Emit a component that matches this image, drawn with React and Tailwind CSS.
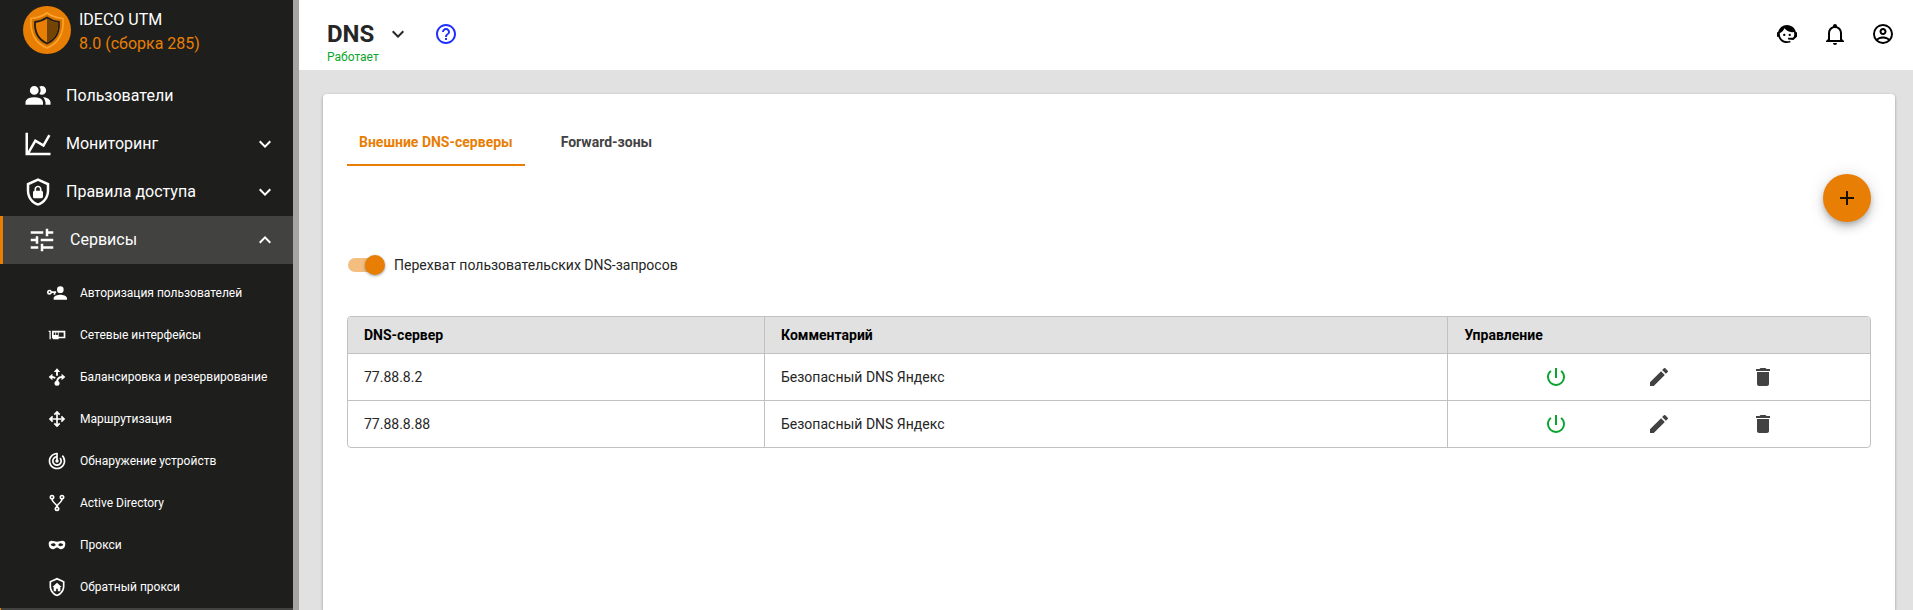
import { MdAdd, MdDelete, MdEdit, MdHelpOutline, MdPowerSettingsNew, MdTrackChanges, MdTune } from "react-icons/md";

const paths = {
  users:
    "M16 17V19H2V17S2 13 9 13 16 17 16 17M12.5 7.5A3.5 3.5 0 1 0 9 11A3.5 3.5 0 0 0 12.5 7.5M15.94 13A5.32 5.32 0 0 1 18 17V19H22V17S22 13.37 15.94 13M15 4A3.39 3.39 0 0 0 13.07 4.59A5 5 0 0 1 13.07 10.41A3.39 3.39 0 0 0 15 11A3.5 3.5 0 0 0 15 4Z",
  chart:
    "M16,11.78L20.24,4.45L21.97,5.45L16.74,14.5L10.23,10.75L5.46,19H22V21H2V3H4V17.54L9.5,8L16,11.78Z",
  shieldLock:
    "M21,11C21,16.55 17.16,21.74 12,23C6.84,21.74 3,16.55 3,11V5L12,1L21,5V11M12,21C15.75,20 19,15.54 19,11.22V6.3L12,3.18L5,6.3V11.22C5,15.54 8.25,20 12,21M14.8,11V9.5C14.8,8.1 13.4,7 12,7C10.6,7 9.2,8.1 9.2,9.5V11C8.6,11 8,11.6 8,12.2V15.7C8,16.4 8.6,17 9.2,17H14.7C15.4,17 16,16.4 16,15.8V12.3C16,11.6 15.4,11 14.8,11M13.5,11H10.5V9.5C10.5,8.7 11.2,8.2 12,8.2C12.8,8.2 13.5,8.7 13.5,9.5V11Z",
  userKey:
    "M11,10V12H10V14H8V12H5.83C5.42,13.17 4.31,14 3,14A3,3 0 0,1 0,11A3,3 0 0,1 3,8C4.31,8 5.42,8.83 5.83,10H11M3,10A1,1 0 0,0 2,11A1,1 0 0,0 3,12A1,1 0 0,0 4,11A1,1 0 0,0 3,10M16,14C18.67,14 24,15.34 24,18V20H8V18C8,15.34 13.33,14 16,14M16,12A4,4 0 0,1 12,8A4,4 0 0,1 16,4A4,4 0 0,1 20,8A4,4 0 0,1 16,12Z",
  card: "M2 7H4.5V17H3V8.5H2V7M22 7V16H14V17H7V16H6V7H22M10 9H8V12H10V9M13 9H11V12H13V9M20 9H14V14H20V9Z",
  arrows:
    "M13,11H18L16.5,9.5L17.92,8.08L21.84,12L17.92,15.92L16.5,14.5L18,13H13V18L14.5,16.5L15.92,17.92L12,21.84L8.08,17.92L9.5,16.5L11,18V13H6L7.5,14.5L6.08,15.92L2.16,12L6.08,8.08L7.5,9.5L6,11H11V6L9.5,7.5L8.08,6.08L12,2.16L15.92,6.08L14.5,7.5L13,6V11Z",
  fork: "M6,2A3,3 0 0,1 9,5C9,6.28 8.19,7.38 7.06,7.81C7.15,8.27 7.39,8.83 8,9.63C9,10.92 11,12.83 12,14.17C13,12.83 15,10.92 16,9.63C16.61,8.83 16.85,8.27 16.94,7.81C15.81,7.38 15,6.28 15,5A3,3 0 0,1 18,2A3,3 0 0,1 21,5C21,6.32 20.14,7.45 18.95,7.85C18.87,8.37 18.64,9 18,9.83C17,11.17 15,13.08 14,14.38C13.39,15.17 13.15,15.73 13.06,16.19C14.19,16.62 15,17.72 15,19A3,3 0 0,1 12,22A3,3 0 0,1 9,19C9,17.72 9.81,16.62 10.94,16.19C10.85,15.73 10.61,15.17 10,14.38C9,13.08 7,11.17 6,9.83C5.36,9 5.13,8.37 5.05,7.85C3.86,7.45 3,6.32 3,5A3,3 0 0,1 6,2M6,4A1,1 0 0,0 5,5A1,1 0 0,0 6,6A1,1 0 0,0 7,5A1,1 0 0,0 6,4M18,4A1,1 0 0,0 17,5A1,1 0 0,0 18,6A1,1 0 0,0 19,5A1,1 0 0,0 18,4M12,18A1,1 0 0,0 11,19A1,1 0 0,0 12,20A1,1 0 0,0 13,19A1,1 0 0,0 12,18Z",
  mask: "M5.5 7C8 7 9.500 8 12 8S16 7 18.500 7C20.500 7 22 8.200 22 10.500C22 14.500 20 17 17 17C14.500 17 13.500 15 12 15S9.500 17 7 17C4 17 2 14.500 2 10.500C2 8.200 3.500 7 5.500 7M7.500 10C6 10 5 11 4.500 11.800C5.500 13 6.500 13.500 7.700 13.500C9 13.500 10 12.800 10.500 12C10 10.800 9 10 7.500 10M16.500 10C15 10 14 10.800 13.500 12C14 12.800 15 13.500 16.300 13.500C17.500 13.500 18.500 13 19.500 11.800C19 11 18 10 16.500 10Z",
  shieldHome:
    "M21,11C21,16.55 17.16,21.74 12,23C6.84,21.74 3,16.55 3,11V5L12,1L21,5V11M12,21C15.75,20 19,15.54 19,11.22V6.3L12,3.18L5,6.3V11.22C5,15.54 8.25,20 12,21M12,7L6.500 12H8V17H11V14H13V17H16V12H17.500Z",
  down: "M7.41,8.58L12,13.17L16.59,8.58L18,10L12,16L6,10L7.41,8.58Z",
  up: "M7.41,15.41L12,10.83L16.59,15.41L18,14L12,8L6,14L7.41,15.41Z",
  agent:
    "M18.72,14.76C19.07,13.91 19.26,13 19.26,12C19.26,11.28 19.15,10.59 18.96,9.95C18.31,10.1 17.63,10.18 16.92,10.18C13.86,10.18 11.15,8.67 9.5,6.34C8.61,8.5 6.91,10.26 4.77,11.22C4.73,11.47 4.73,11.74 4.73,12A7.27,7.27 0 0,0 12,19.27C13.05,19.27 14.06,19.04 14.97,18.63C15.54,19.72 15.8,20.26 15.78,20.26C14.14,20.81 12.87,21.08 12,21.08C9.58,21.08 7.27,20.13 5.57,18.42C4.53,17.38 3.76,16.11 3.33,14.73H2V10.18H3.09C3.93,6.04 7.6,2.92 12,2.92C14.4,2.92 16.71,3.87 18.42,5.58C19.69,6.84 20.54,8.45 20.89,10.18H22V14.73H21.94L18.38,18L13.08,17.4V15.73H17.91L18.72,14.76M9.27,11.77C9.57,11.77 9.86,11.89 10.07,12.11C10.28,12.32 10.4,12.61 10.4,12.91C10.4,13.21 10.28,13.5 10.07,13.71C9.86,13.92 9.57,14.04 9.27,14.04C8.64,14.04 8.13,13.54 8.13,12.91C8.13,12.28 8.64,11.77 9.27,11.77M14.72,11.77C15.35,11.77 15.85,12.28 15.85,12.91C15.85,13.54 15.35,14.04 14.72,14.04C14.09,14.04 13.58,13.54 13.58,12.91A1.14,1.14 0 0,1 14.72,11.77Z",
  bell: "M10,21H14A2,2 0 0,1 12,23A2,2 0 0,1 10,21M21,19V20H3V19L5,17V11C5,7.9 7.03,5.17 10,4.29C10,4.19 10,4.1 10,4A2,2 0 0,1 12,2A2,2 0 0,1 14,4C14,4.1 14,4.19 14,4.29C16.97,5.17 19,7.9 19,11V17L21,19M17,11A5,5 0 0,0 12,6A5,5 0 0,0 7,11V18H17V11Z",
  account:
    "M12,2A10,10 0 0,0 2,12A10,10 0 0,0 12,22A10,10 0 0,0 22,12A10,10 0 0,0 12,2M7.07,18.28C7.5,17.38 10.12,16.5 12,16.5C13.88,16.5 16.5,17.38 16.93,18.28C15.57,19.36 13.86,20 12,20C10.14,20 8.43,19.36 7.07,18.28M18.36,16.83C16.93,15.09 13.46,14.5 12,14.5C10.54,14.5 7.07,15.09 5.64,16.83C4.62,15.5 4,13.82 4,12C4,7.59 7.59,4 12,4C16.41,4 20,7.59 20,12C20,13.82 19.38,15.5 18.36,16.83M12,6C10.06,6 8.5,7.56 8.5,9.5C8.5,11.44 10.06,13 12,13C13.94,13 15.5,11.44 15.5,9.5C15.5,7.56 13.94,6 12,6M12,11A1.5,1.5 0 0,1 10.5,9.5A1.5,1.5 0 0,1 12,8A1.5,1.5 0 0,1 13.5,9.5A1.5,1.5 0 0,1 12,11Z",
};

function Icon({ name, className }) {
  return (
    <svg viewBox="0 0 24 24" className={className} fill="currentColor" fillRule="evenodd" aria-hidden="true">
      <path d={paths[name]} />
    </svg>
  );
}

function BalanceIcon({ className }) {
  return (
    <svg viewBox="0 0 24 24" className={className} fill="currentColor" aria-hidden="true">
      <path d="M12 1.500L15.800 6H8.200ZM2 12L6.500 8.200V15.800ZM22 12L17.500 8.200V15.800Z" />
      <circle cx="12" cy="19.500" r="3" />
      <path d="M12 5V10.500M6 12C8 12 9 12.500 9.800 13.500M18 12C14 12 12 14.500 12 19" fill="none" stroke="currentColor" strokeWidth="2.200" />
    </svg>
  );
}

function Logo() {
  return (
    <svg viewBox="0 0 48 48" className="size-12 shrink-0" aria-hidden="true">
      <circle cx="24" cy="24" r="24" fill="#e87e04" />
      <path d="M24 7C28 10 34 12 40 12.500C41 25 38 36 24 42C10 36 7 25 8 12.500C14 12 20 10 24 7Z" fill="#d87400" stroke="#ffa42b" strokeWidth="1.600" />
      <path d="M24 11.500C27.500 14 32 15.500 36 16C36.500 25 34 33 24 37.500C14 33 11.500 25 12 16C16 15.500 20.500 14 24 11.500Z" fill="#e87e04" stroke="#1e1e1c" strokeWidth="1.800" />
      <path d="M24 12.600C27.500 15 31.500 16.300 35.200 16.800C35.500 25 33 32.300 24 36.500Z" fill="#744405" />
    </svg>
  );
}

const mainItems = [
  { label: "Пользователи", icon: "users" },
  { label: "Мониторинг", icon: "chart", expandable: true },
  { label: "Правила доступа", icon: "shieldLock", expandable: true },
];

const serviceItems = [
  { label: "Авторизация пользователей", icon: "userKey" },
  { label: "Сетевые интерфейсы", icon: "card" },
  { label: "Балансировка и резервирование", icon: "balance" },
  { label: "Маршрутизация", icon: "arrows" },
  { label: "Обнаружение устройств", icon: "radar" },
  { label: "Active Directory", icon: "fork" },
  { label: "Прокси", icon: "mask" },
  { label: "Обратный прокси", icon: "shieldHome" },
];

function ServiceIcon({ name }) {
  if (name === "balance") return <BalanceIcon className="size-5" />;
  if (name === "radar") return <MdTrackChanges className="size-5" />;
  return <Icon name={name} className="size-5" />;
}

function Sidebar() {
  return (
    <aside className="flex w-[299px] shrink-0 flex-col overflow-hidden border-r-6 border-[#a6a5a3] bg-[#1e1e1c] text-white">
      <div className="flex h-18 shrink-0 gap-2 pt-[6px] pl-[23px]">
        <Logo />
        <div className="pt-[2px] text-base leading-6">
          <p>IDECO UTM</p>
          <p className="text-[#e87e04]">8.0 (сборка 285)</p>
        </div>
      </div>
      <nav>
        {mainItems.map((item) => (
          <button key={item.label} type="button" className="flex h-12 w-full items-center pr-[16px] pl-[23px] text-base">
            <Icon name={item.icon} className="size-[30px]" />
            <span className="ml-[13px] flex-1 text-left">{item.label}</span>
            {item.expandable && <Icon name="down" className="size-6" />}
          </button>
        ))}
        <button
          type="button"
          aria-expanded="true"
          className="flex h-12 w-full items-center border-l-3 border-[#e87e04] bg-[#424240] pr-[16px] pl-[24px] text-base"
        >
          <MdTune className="size-[30px]" />
          <span className="ml-[13px] flex-1 text-left">Сервисы</span>
          <Icon name="up" className="size-6" />
        </button>
        <ul className="pt-2">
          {serviceItems.map((item) => (
            <li key={item.label}>
              <a href="#" className="flex h-[42px] items-center gap-[13px] pl-[47px] text-xs">
                <ServiceIcon name={item.icon} />
                {item.label}
              </a>
            </li>
          ))}
        </ul>
      </nav>
      <div className="min-h-[2px] flex-1 border-l border-[#e87e04] bg-[#424240]" />
    </aside>
  );
}

function Header() {
  return (
    <header className="flex h-[70px] shrink-0 items-start justify-between bg-white pr-[18px] pl-7">
      <div className="pt-[18px]">
        <div className="flex h-8 items-center">
          <h1 className="text-2xl font-bold text-[#262626]">DNS</h1>
          <button type="button" aria-label="Выбрать раздел" className="ml-3 text-[#262626]">
            <Icon name="down" className="size-6" />
          </button>
          <button type="button" aria-label="Справка" className="ml-6 text-[#1f2fff]">
            <MdHelpOutline className="size-6" />
          </button>
        </div>
        <p className="-mt-px text-xs leading-4 text-[#0aa52e]">Работает</p>
      </div>
      <div className="flex gap-6 pt-[22px] text-black">
        <button type="button" aria-label="Поддержка"><Icon name="agent" className="size-6" /></button>
        <button type="button" aria-label="Уведомления"><Icon name="bell" className="size-6" /></button>
        <button type="button" aria-label="Профиль"><Icon name="account" className="size-6" /></button>
      </div>
    </header>
  );
}

const servers = [
  { address: "77.88.8.2", comment: "Безопасный DNS Яндекс" },
  { address: "77.88.8.88", comment: "Безопасный DNS Яндекс" },
];

function ServersTable() {
  return (
    <div className="mt-[34px] overflow-hidden rounded border border-[#c1c1c1]">
      <table className="w-full table-fixed border-separate border-spacing-0 text-left text-sm text-[#262626]">
        <thead>
          <tr className="bg-[#e1e1e1] text-black">
            <th className="h-[37px] w-[27.4%] border-r border-b border-[#c1c1c1] px-4 font-bold">DNS-сервер</th>
            <th className="w-[44.9%] border-r border-b border-[#c1c1c1] px-4 font-bold">Комментарий</th>
            <th className="border-b border-[#c1c1c1] px-4 font-bold">Управление</th>
          </tr>
        </thead>
        <tbody>
          {servers.map((server) => (
            <tr key={server.address} className="group">
              <td className="h-[47px] border-r border-b border-[#c1c1c1] px-4 group-last:h-[46px] group-last:border-b-0">{server.address}</td>
              <td className="border-r border-b border-[#c1c1c1] px-4 group-last:border-b-0">{server.comment}</td>
              <td className="border-b border-[#c1c1c1] px-4 group-last:border-b-0">
                <div className="flex justify-evenly text-[#424242]">
                  <button type="button" aria-label="Выключить" className="text-[#0aa52e]"><MdPowerSettingsNew className="size-6" /></button>
                  <button type="button" aria-label="Редактировать"><MdEdit className="size-6" /></button>
                  <button type="button" aria-label="Удалить"><MdDelete className="size-6" /></button>
                </div>
              </td>
            </tr>
          ))}
        </tbody>
      </table>
    </div>
  );
}

export default function App() {
  return (
    <div className="flex h-screen overflow-hidden bg-[#e1e1e1] font-[Roboto,sans-serif]">
      <Sidebar />
      <div className="flex min-w-0 flex-1 flex-col">
        <Header />
        <main className="flex flex-1 flex-col pt-6 pr-[18px] pl-6">
          <section className="flex-1 rounded-t bg-white px-6 pt-6 shadow-[0_1px_3px_rgba(0,0,0,0.35)]">
            <div role="tablist" className="flex gap-6 text-sm font-bold">
              <button type="button" role="tab" aria-selected="true" className="h-12 border-b-2 border-[#e87e04] px-3 pt-[2px] text-[#e87e04]">
                Внешние DNS-серверы
              </button>
              <button type="button" role="tab" aria-selected="false" className="h-12 border-b-2 border-transparent px-3 pt-[2px] text-[#424242]">
                Forward-зоны
              </button>
            </div>
            <div className="mt-2 flex justify-end">
              <button
                type="button"
                aria-label="Добавить"
                className="flex size-12 items-center justify-center rounded-full bg-[#e87e04] text-black/87 shadow-[0_3px_5px_-1px_rgba(0,0,0,0.2),0_6px_10px_rgba(0,0,0,0.14),0_1px_18px_rgba(0,0,0,0.12)]"
              >
                <MdAdd className="size-6" />
              </button>
            </div>
            <label className="mt-[26px] flex h-[34px] w-fit items-center gap-[10px] text-sm text-[#262626]">
              <input
                type="checkbox"
                role="switch"
                defaultChecked
                className="relative ml-px h-[14px] w-9 appearance-none rounded-full bg-[#f4be81] before:absolute before:-top-[3px] before:-right-px before:size-5 before:rounded-full before:bg-[#e87e04] before:shadow-[0_1px_3px_rgba(0,0,0,0.4)]"
              />
              Перехват пользовательских DNS-запросов
            </label>
            <ServersTable />
          </section>
        </main>
      </div>
    </div>
  );
}
